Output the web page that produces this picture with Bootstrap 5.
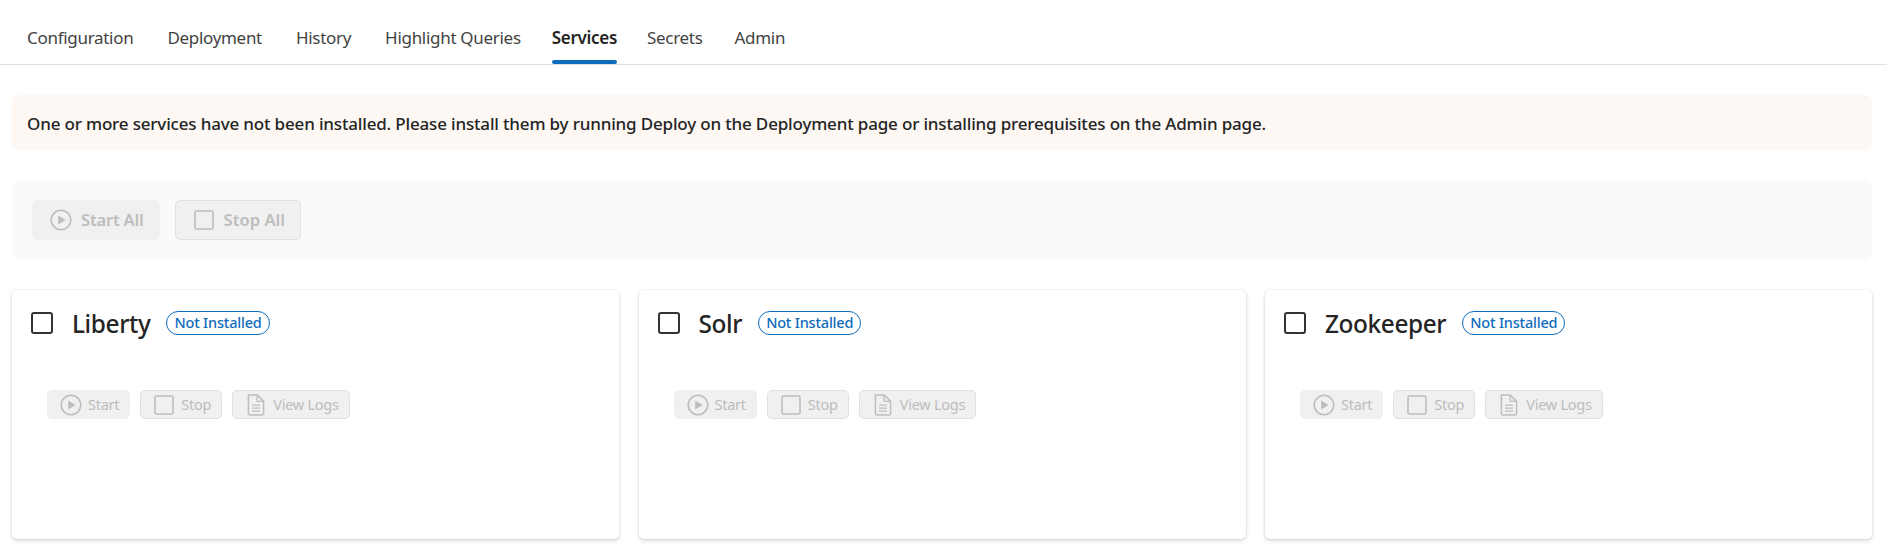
<!DOCTYPE html>
<html lang="en">
<head>
  <meta charset="UTF-8">
  <title>Services</title>
  <link href="https://cdn.jsdelivr.net/npm/bootstrap@5.3.0/dist/css/bootstrap.min.css" rel="stylesheet">
  <style>
    body {
      font-family: "Noto Sans", "Open Sans", sans-serif;
      color: #242424;
      background: #fff;
    }
    .page-body { padding: 30px 15px 12px 12px; }
    .tab-bar { height: 65px; border-bottom: 1px solid #e0e0e0; padding-left: 27px; gap: 34px; }
    .tab-link {
      position: relative;
      display: flex;
      align-items: center;
      height: 64px;
      padding: 26px 0 14px 0;
      color: #424242;
      font-size: 17px;
      letter-spacing: -.3px;
      text-decoration: none;
    }
    .tab-link.is-active { color: #242424; font-weight: 600; margin-left: -3px; }
    .tab-link.is-active::after {
      content: "";
      position: absolute;
      left: 0;
      right: 0;
      bottom: 0;
      height: 4px;
      border-radius: 2px;
      background: #0f6cbd;
    }
    .tab-snug { margin-left: -4px; }
    .tab-snug-sm { margin-left: -2px; }
    .notice-box {
      height: 55px;
      background: #fdf8f4;
      border-radius: 7px;
      padding: 2px 15px 0;
      font-size: 17px;
      font-weight: 500;
      letter-spacing: -.17px;
      margin-bottom: 30px;
    }
    .tool-box {
      height: 80px;
      background: #fafafa;
      border-radius: 7px;
      padding: 0 20px;
      gap: 15px;
      margin-bottom: 30px;
    }
    .off-btn {
      display: inline-flex;
      align-items: center;
      background: #f0f0f0;
      border: 1px solid #e0e0e0;
      border-radius: 5px;
      color: #bdbdbd;
      font-weight: 600;
      opacity: 1;
    }
    .btn.off-btn:disabled { background: #f0f0f0; border-color: #e0e0e0; color: #bdbdbd; opacity: 1; }
    .btn.off-btn.no-line:disabled { border-color: #f0f0f0; }
    .off-lg { height: 40px; padding: 0 15px 0 17px; gap: 9px; font-size: 16.6px; letter-spacing: -.2px; }
    .off-lg.has-line { letter-spacing: 0; }
    .off-sm { height: 29px; padding: 0 10px 0 12px; gap: 6px; font-size: 14.5px; font-weight: 400; letter-spacing: -.25px; }
    .svc-grid { display: grid; grid-template-columns: repeat(3, 1fr); gap: 19.5px; }
    .svc-card {
      height: 249px;
      border: 0;
      border-radius: 5px;
      box-shadow: 0 0 2px rgba(0,0,0,.12), 0 2px 4px rgba(0,0,0,.14);
      padding: 21px 19px 0 18px;
    }
    .svc-head { height: 24px; }
    .svc-title { font-size: 24.4px; font-weight: 500; line-height: 32px; margin: 0 0 0 18px; letter-spacing: -.4px; position: relative; top: 1px; }
    .svc-badge {
      margin-left: 16px;
      border: 1px solid #0f6cbd;
      border-radius: 12px;
      height: 24px;
      padding: 0 7px;
      color: #0f6cbd;
      font-size: 14.5px;
      font-weight: 500;
      letter-spacing: -.2px;
      line-height: 21px;
    }
    .svc-actions { margin: 55px 0 0 17px; gap: 10px; }
  </style>
</head>
<body>
  <nav class="tab-bar d-flex">
    <a class="tab-link" href="#">Configuration</a>
    <a class="tab-link" href="#">Deployment</a>
    <a class="tab-link" href="#">History</a>
    <a class="tab-link" href="#">Highlight Queries</a>
    <a class="tab-link is-active" href="#">Services</a>
    <a class="tab-link tab-snug" href="#">Secrets</a>
    <a class="tab-link tab-snug-sm" href="#">Admin</a>
  </nav>

  <svg width="0" height="0" class="d-block">
    <symbol id="ico-play" viewBox="0 0 22 22">
      <circle cx="11" cy="11" r="9.8" fill="none" stroke="currentColor" stroke-width="1.6"/>
      <path d="M8.2 6.4v9.2l7.4-4.6z" fill="currentColor"/>
    </symbol>
    <symbol id="ico-stop" viewBox="0 0 22 22">
      <rect x="2" y="2" width="18" height="18" rx="1.5" fill="none" stroke="currentColor" stroke-width="1.6"/>
    </symbol>
    <symbol id="ico-doc" viewBox="0 0 22 22">
      <path d="M3.4 1h8.8l6.4 6.4v11.8a1.8 1.8 0 0 1-1.8 1.8H5.2a1.8 1.8 0 0 1-1.8-1.8z" fill="none" stroke="currentColor" stroke-width="1.5" stroke-linejoin="round"/>
      <path d="M12 1.2V6.2a1.2 1.2 0 0 0 1.2 1.2h5.2M7 11.2h8M7 14.2h8M7 17.2h8" fill="none" stroke="currentColor" stroke-width="1.3"/>
    </symbol>
  </svg>

  <main class="page-body">
    <div class="notice-box d-flex align-items-center">One or more services have not been installed. Please install them by running Deploy on the Deployment page or installing prerequisites on the Admin page.</div>

    <div class="tool-box d-flex align-items-center">
      <button class="btn off-btn off-lg no-line" disabled><svg width="22" height="22"><use href="#ico-play"/></svg>Start All</button>
      <button class="btn off-btn off-lg has-line" disabled><svg width="22" height="22"><use href="#ico-stop"/></svg>Stop All</button>
    </div>

    <div class="svc-grid">
      <div class="card svc-card">
        <div class="svc-head d-flex align-items-center">
          <svg width="24" height="24" viewBox="0 0 24 24"><rect x="2" y="2" width="20" height="20" rx="2" fill="none" stroke="#333" stroke-width="2"/></svg>
          <h2 class="svc-title">Liberty</h2>
          <span class="svc-badge">Not Installed</span>
        </div>
        <div class="svc-actions d-flex">
          <button class="btn off-btn off-sm no-line" disabled><svg width="22" height="22"><use href="#ico-play"/></svg>Start</button>
          <button class="btn off-btn off-sm" disabled><svg width="22" height="22"><use href="#ico-stop"/></svg>Stop</button>
          <button class="btn off-btn off-sm" disabled><svg width="22" height="22"><use href="#ico-doc"/></svg>View Logs</button>
        </div>
      </div>
      <div class="card svc-card">
        <div class="svc-head d-flex align-items-center">
          <svg width="24" height="24" viewBox="0 0 24 24"><rect x="2" y="2" width="20" height="20" rx="2" fill="none" stroke="#333" stroke-width="2"/></svg>
          <h2 class="svc-title">Solr</h2>
          <span class="svc-badge">Not Installed</span>
        </div>
        <div class="svc-actions d-flex">
          <button class="btn off-btn off-sm no-line" disabled><svg width="22" height="22"><use href="#ico-play"/></svg>Start</button>
          <button class="btn off-btn off-sm" disabled><svg width="22" height="22"><use href="#ico-stop"/></svg>Stop</button>
          <button class="btn off-btn off-sm" disabled><svg width="22" height="22"><use href="#ico-doc"/></svg>View Logs</button>
        </div>
      </div>
      <div class="card svc-card">
        <div class="svc-head d-flex align-items-center">
          <svg width="24" height="24" viewBox="0 0 24 24"><rect x="2" y="2" width="20" height="20" rx="2" fill="none" stroke="#333" stroke-width="2"/></svg>
          <h2 class="svc-title">Zookeeper</h2>
          <span class="svc-badge">Not Installed</span>
        </div>
        <div class="svc-actions d-flex">
          <button class="btn off-btn off-sm no-line" disabled><svg width="22" height="22"><use href="#ico-play"/></svg>Start</button>
          <button class="btn off-btn off-sm" disabled><svg width="22" height="22"><use href="#ico-stop"/></svg>Stop</button>
          <button class="btn off-btn off-sm" disabled><svg width="22" height="22"><use href="#ico-doc"/></svg>View Logs</button>
        </div>
      </div>
    </div>
  </main>
</body>
</html>
